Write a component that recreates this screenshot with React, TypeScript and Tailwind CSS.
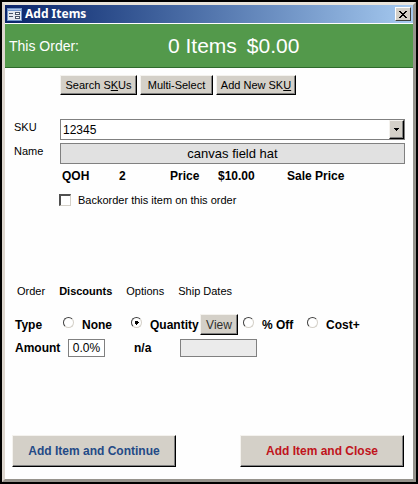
import { useState } from "react";
import type { ReactNode } from "react";

const tabs = ["Order", "Discounts", "Options", "Ship Dates"];

const raised =
  "bg-[#d4d0c8] border border-t-[#f4f2ee] border-l-[#f4f2ee] border-b-black border-r-black shadow-[inset_-1px_-1px_0_#808080]";

export default function App() {
  const [tab, setTab] = useState("Discounts");
  const [type, setType] = useState("Quantity");

  return (
    <div className="flex min-h-screen flex-col bg-black p-0.5 font-['Liberation_Sans',Arial,sans-serif] text-[11px] leading-4 text-black">
      <main className="flex flex-1 flex-col border-[3px] border-t-[#e8e4dc] border-r-[#96938c] border-b-[#96938c] border-l-[#ddd6ce] bg-[#fefefe]">
        <header className="flex h-[18px] items-center bg-linear-to-r from-[#0a246a] to-[#a6caf0] px-0.5">
          <FormIcon />
          <h1 className="ml-[3px] flex-1 font-['Noto_Sans',sans-serif] text-[12px] leading-[18px] font-bold text-white">
            Add Items
          </h1>
          <button
            aria-label="Close"
            className="flex h-3.5 w-4 items-center justify-center border border-t-white border-r-[#404040] border-b-[#404040] border-l-white bg-[#d4d0c8]"
          >
            <svg width="8" height="7" viewBox="0 0 8 7" shapeRendering="crispEdges">
              <path
                d="M0 0h2v1h1v1h2V1h1V0h2v1H7v1H6v1H5v1h1v1h1v1h1v1H6V6H5V5H3v1H2v1H0V6h1V5h1V4h1V3H2V2H1V1H0z"
                fill="#000"
              />
            </svg>
          </button>
        </header>

        <section className="mt-px flex h-11 items-center border-b border-[#2f6b2c] bg-[#53994b] pl-1 text-white">
          <span className="w-[159px] text-[14px]">This Order:</span>
          <span className="text-[21px]">0 Items</span>
          <span className="ml-2.5 text-[21px]">$0.00</span>
        </section>

        <div className="mt-[7px] ml-[55px] flex gap-[3px]">
          <ToolButton className="w-[77px]">
            Search S<u>K</u>Us
          </ToolButton>
          <ToolButton className="w-[73px]">Multi-Select</ToolButton>
          <ToolButton className="w-20">
            Add New SK<u>U</u>
          </ToolButton>
        </div>

        <div className="mt-6 mr-2 grid grid-cols-[46px_1fr] gap-y-[3px] pl-[9px]">
          <label htmlFor="sku">SKU</label>
          <div className="relative">
            <select
              id="sku"
              className="block h-[21px] w-full appearance-none border border-[#808080] bg-white pl-0.5 text-[12px]"
            >
              <option>12345</option>
            </select>
            <span
              className={`pointer-events-none absolute top-px right-px flex h-[19px] w-[15px] items-center justify-center ${raised}`}
            >
              <svg width="5" height="3" viewBox="0 0 5 3" shapeRendering="crispEdges">
                <path d="M0 0h5v1H4v1H3v1H2V2H1V1H0z" />
              </svg>
            </span>
          </div>
          <label htmlFor="name">Name</label>
          <input
            id="name"
            readOnly
            defaultValue="canvas field hat"
            className="h-[21px] w-full border border-[#808080] bg-[#e1e1e1] text-center text-[13px]"
          />
        </div>

        <div className="mt-1 ml-[57px] grid grid-cols-[57px_51px_48px_69px_1fr] text-[12px] font-bold">
          <span>QOH</span>
          <span>2</span>
          <span>Price</span>
          <span>$10.00</span>
          <span>Sale Price</span>
        </div>

        <label className="mt-2 ml-[54px] flex items-center gap-[7px]">
          <input
            type="checkbox"
            className="size-3 appearance-none border-t-2 border-r border-b border-l-2 border-t-[#505050] border-r-[#d4d0c8] border-b-[#d4d0c8] border-l-[#505050] bg-white checked:bg-[#505050]"
          />
          Backorder this item on this order
        </label>

        <nav className="mt-[75px] ml-3 flex gap-3.5">
          {tabs.map((t) => (
            <button
              key={t}
              onClick={() => setTab(t)}
              className={t === tab ? "font-bold" : ""}
            >
              {t}
            </button>
          ))}
        </nav>

        <fieldset
          aria-label="Discount type"
          className="mt-[15px] ml-2.5 grid grid-cols-[48px_68px_69px_43px_64px_1fr] items-center text-[12px] font-bold"
        >
          <span>Type</span>
          <Option value="None" type={type} onPick={setType} />
          <Option value="Quantity" type={type} onPick={setType} />
          <button className={`h-[21px] w-[38px] font-normal text-[#303030] ${raised}`}>View</button>
          <Option value="% Off" type={type} onPick={setType} />
          <Option value="Cost+" type={type} onPick={setType} />
        </fieldset>

        <div className="mt-1 ml-2.5 flex items-center text-[12px] font-bold">
          <label htmlFor="amount" className="w-[53px]">
            Amount
          </label>
          <input
            id="amount"
            defaultValue="0.0%"
            className="h-[18px] w-[37px] border border-[#808080] bg-white text-center font-normal"
          />
          <span className="ml-[29px] w-[46px]">n/a</span>
          <input
            aria-label="Discount value"
            readOnly
            className="h-[18px] w-[77px] border border-[#808080] bg-[#ebebeb]"
          />
        </div>

        <footer className="mt-auto mr-[9px] mb-3 ml-[7px] flex justify-between">
          <button className={`h-8 w-[164px] text-[12px] font-bold text-[#244a86] ${raised}`}>
            Add Item and Continue
          </button>
          <button className={`h-8 w-[164px] text-[12px] font-bold text-[#c0141c] ${raised}`}>
            Add Item and Close
          </button>
        </footer>
      </main>
    </div>
  );
}

function ToolButton({ className, children }: { className: string; children: ReactNode }) {
  return <button className={`h-5 whitespace-nowrap ${raised} ${className}`}>{children}</button>;
}

function Option({
  value,
  type,
  onPick,
}: {
  value: string;
  type: string;
  onPick: (v: string) => void;
}) {
  return (
    <label className="flex items-center gap-2 whitespace-nowrap">
      <input
        type="radio"
        name="discount-type"
        checked={type === value}
        onChange={() => onPick(value)}
        className="mb-1 size-[11px] shrink-0 appearance-none rounded-full border border-t-[#404040] border-r-[#d4d0c8] border-b-[#d4d0c8] border-l-[#404040] bg-white checked:bg-[radial-gradient(circle,#000_2px,#fff_2px)]"
      />
      {value}
    </label>
  );
}

function FormIcon() {
  return (
    <svg width="15" height="13" viewBox="0 0 15 13" shapeRendering="crispEdges">
      <rect width="15" height="13" fill="#6f93c9" />
      <rect x="1" y="3" width="13" height="9" fill="#e4e8ee" />
      <rect x="1" y="1" width="13" height="1" fill="#a9c3e8" />
      <path d="M2 5h4v1H2zM2 8h4v1H2z" fill="#4a5568" />
      <path d="M8 4h5v3H8zM8 8h5v3H8z" fill="#4a5568" />
      <path d="M9 5h3v1H9zM9 9h3v1H9z" fill="#fff" />
    </svg>
  );
}
